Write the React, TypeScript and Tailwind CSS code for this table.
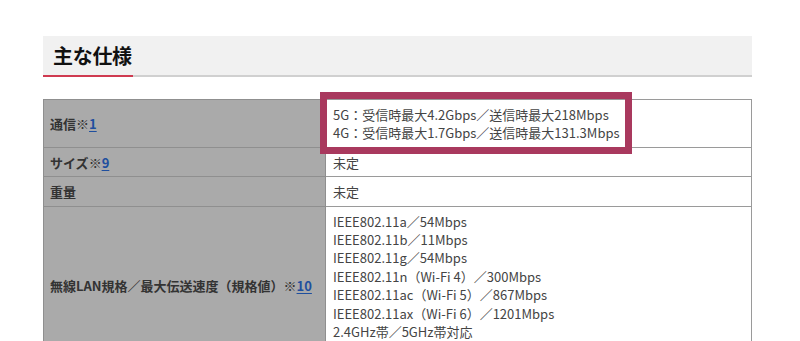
import React from "react";

const jp = { fontFamily: '"Noto Sans CJK JP", "Noto Sans", sans-serif' };

type Row = { label: React.ReactNode; lines: string[] };

const Note = ({ n }: { n: string }) => (
  <>
    ※<a href="#" className="text-[#1f4f9e] underline underline-offset-2">{n}</a>
  </>
);

const rows: Row[] = [
  {
    label: (
      <>
        通信<Note n="1" />
      </>
    ),
    lines: [
      "5G：受信時最大4.2Gbps／送信時最大218Mbps",
      "4G：受信時最大1.7Gbps／送信時最大131.3Mbps",
    ],
  },
  {
    label: (
      <>
        サイズ<Note n="9" />
      </>
    ),
    lines: ["未定"],
  },
  { label: "重量", lines: ["未定"] },
  {
    label: (
      <>
        無線LAN規格／最大伝送速度（規格値）<Note n="10" />
      </>
    ),
    lines: [
      "IEEE802.11a／54Mbps",
      "IEEE802.11b／11Mbps",
      "IEEE802.11g／54Mbps",
      "IEEE802.11n（Wi-Fi 4）／300Mbps",
      "IEEE802.11ac（Wi-Fi 5）／867Mbps",
      "IEEE802.11ax（Wi-Fi 6）／1201Mbps",
      "2.4GHz帯／5GHz帯対応",
      "MU-MIMO対応",
    ],
  },
];

export default function App() {
  return (
    <div className="min-h-[341px] bg-white pt-[36px] pl-[43px]" style={jp}>
      <div className="w-[709px]">
        {/* section heading */}
        <div className="relative h-[41px] bg-[#f1f1f1] border-b-2 border-[#d0d0d0] flex items-center pl-[10px]">
          <h2 className="text-[20px] font-bold text-[#111] leading-none tracking-[-0.3px]">主な仕様</h2>
          <span className="absolute left-0 bottom-[-2px] w-[90px] h-[2px] bg-[#cf3a50]" />
        </div>

        {/* spec table */}
        <div className="relative mt-[22px]">
          <table className="w-full border-collapse border border-[#9a9a9a] text-[13px] leading-[18.4px]">
            <tbody>
              {rows.map((r, i) => (
                <tr key={i}>
                  <th className="w-[282px] bg-[#aaaaaa] border border-[#8f8f8f] px-[6px] pt-[6px] pb-[4px] text-left align-middle font-bold text-[#333]">
                    {r.label}
                  </th>
                  <td className="bg-white border border-[#9a9a9a] pl-[7px] pr-[6px] pt-[6px] pb-[4px] text-[#444] align-top">
                    {r.lines.map((l, j) => (
                      <div key={j}>{l}</div>
                    ))}
                  </td>
                </tr>
              ))}
            </tbody>
          </table>
          {/* highlight frame over the communication row */}
          <div className="absolute left-[277px] top-[-7px] w-[312px] h-[62px] border-[7px] border-[#a9395e] pointer-events-none" />
        </div>
      </div>
    </div>
  );
}
